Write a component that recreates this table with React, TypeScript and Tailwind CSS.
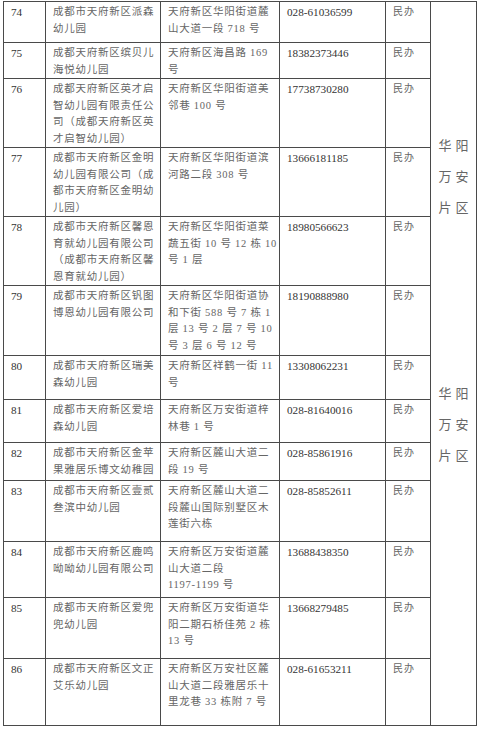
const rows = [
  {
    no: '74',
    name: ['成都市天府新区派森', '幼儿园'],
    addr: ['天府新区华阳街道麓', '山大道一段 718 号'],
    tel: '028-61036599',
    h: 'h-[41px]',
  },
  {
    no: '75',
    name: ['成都天府新区缤贝儿', '海悦幼儿园'],
    addr: ['天府新区海昌路 169', '号'],
    tel: '18382373446',
    h: 'h-[36px]',
  },
  {
    no: '76',
    name: ['成都天府新区英才启', '智幼儿园有限责任公', '司（成都天府新区英', '才启智幼儿园）'],
    addr: ['天府新区华阳街道美', '邻巷 100 号'],
    tel: '17738730280',
    h: 'h-[69px]',
  },
  {
    no: '77',
    name: ['成都市天府新区金明', '幼儿园有限公司（成', '都市天府新区金明幼', '儿园）'],
    addr: ['天府新区华阳街道滨', '河路二段 308 号'],
    tel: '13666181185',
    h: 'h-[68px]',
  },
  {
    no: '78',
    name: ['成都市天府新区馨恩', '育就幼儿园有限公司', '（成都市天府新区馨', '恩育就幼儿园）'],
    addr: ['天府新区华阳街道菜', '蔬五街 10 号 12 栋 10', '号 1 层'],
    tel: '18980566623',
    h: 'h-[68px]',
  },
  {
    no: '79',
    name: ['成都市天府新区钒图', '博恩幼儿园有限公司'],
    addr: ['天府新区华阳街道协', '和下街 588 号 7 栋 1', '层 13 号 2 层 7 号 10', '号 3 层 6 号 12 号'],
    tel: '18190888980',
    h: 'h-[70px]',
  },
  {
    no: '80',
    name: ['成都市天府新区瑞美', '森幼儿园'],
    addr: ['天府新区祥鹤一街 11', '号'],
    tel: '13308062231',
    h: 'h-[44px]',
  },
  {
    no: '81',
    name: ['成都市天府新区爱培', '森幼儿园'],
    addr: ['天府新区万安街道梓', '林巷 1 号'],
    tel: '028-81640016',
    h: 'h-[43px]',
  },
  {
    no: '82',
    name: ['成都市天府新区金苹', '果雅居乐博文幼稚园'],
    addr: ['天府新区麓山大道二', '段 19 号'],
    tel: '028-85861916',
    h: 'h-[38px]',
  },
  {
    no: '83',
    name: ['成都市天府新区壹贰', '叁滨中幼儿园'],
    addr: ['天府新区麓山大道二', '段麓山国际别墅区木', '莲街六栋'],
    tel: '028-85852611',
    h: 'h-[61px]',
  },
  {
    no: '84',
    name: ['成都市天府新区鹿鸣', '呦呦幼儿园有限公司'],
    addr: ['天府新区万安街道麓', '山大道二段', '1197-1199 号'],
    tel: '13688438350',
    h: 'h-[56px]',
  },
  {
    no: '85',
    name: ['成都市天府新区爱兜', '兜幼儿园'],
    addr: ['天府新区万安街道华', '阳二期石桥佳苑 2 栋', '13 号'],
    tel: '13668279485',
    h: 'h-[61px]',
  },
  {
    no: '86',
    name: ['成都市天府新区文正', '艾乐幼儿园'],
    addr: ['天府新区万安社区麓', '山大道二段雅居乐十', '里龙巷 33 栋附 7 号'],
    tel: '028-61653211',
    h: 'h-[67px]',
  },
];

const cell = 'border border-[#4a4a4a] align-top pt-[2px] px-[7px]';

function Lines({ items }: { items: string[] }) {
  return (
    <>
      {items.map((t, i) => (
        <div key={i} className="whitespace-nowrap">
          {t}
        </div>
      ))}
    </>
  );
}

function Zone() {
  return (
    <div className="flex flex-col items-center text-[13px] leading-[31px] tracking-[4px] pl-[4px] text-[#666]">
      <div>华阳</div>
      <div>万安</div>
      <div>片区</div>
    </div>
  );
}

export default function App() {
  return (
    <div
      className="w-[480px] h-[729px] bg-white pl-[3px] pt-[1px] overflow-hidden"
      style={{ fontFamily: "'Liberation Serif', 'Noto Sans CJK SC', serif" }}
    >
      <table className="table-fixed border-collapse w-[473px] text-[11.2px] leading-[16.5px] text-[#666]">
        <colgroup>
          <col className="w-[42px]" />
          <col className="w-[115px]" />
          <col className="w-[119px]" />
          <col className="w-[106px]" />
          <col className="w-[45px]" />
          <col className="w-[46px]" />
        </colgroup>
        <tbody>
          {rows.map((r, i) => (
            <tr key={r.no} className={r.h}>
              <td className={`${cell} text-[#333]`}>{r.no}</td>
              <td className={`${cell} text-[10.5px] tracking-[0.75px]`}>
                <Lines items={r.name} />
              </td>
              <td className={`${cell} text-[10.5px] tracking-[0.75px]`}>
                <Lines items={r.addr} />
              </td>
              <td className={`${cell} text-[#333]`}>{r.tel}</td>
              <td className={`${cell} text-[10px] tracking-[1px]`}>民办</td>
              {i === 0 && (
                <td rowSpan={rows.length} className="border border-[#4a4a4a] align-top p-0">
                  <div className="pt-[128px]">
                    <Zone />
                  </div>
                  <div className="mt-[155px]">
                    <Zone />
                  </div>
                </td>
              )}
            </tr>
          ))}
        </tbody>
      </table>
    </div>
  );
}
